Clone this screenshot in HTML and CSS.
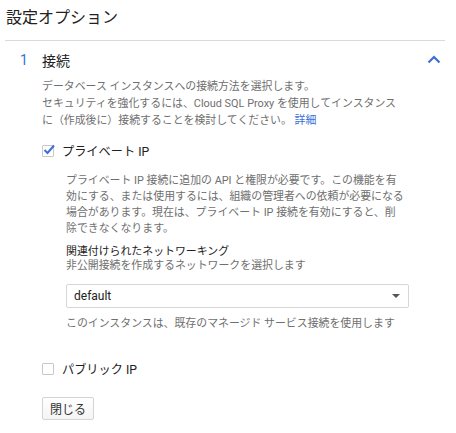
FILE: index.html
```html
<!DOCTYPE html>
<html lang="ja">
<head>
<meta charset="utf-8">
<link rel="stylesheet" href="styles.css">
</head>
<body>
<div class="page">
  <h1 class="title">設定オプション</h1>
  <section class="step">
    <div class="step-head">
      <span class="step-num">1</span>
      <span class="step-name">接続</span>
      <svg class="chevron" width="14" height="9" viewBox="0 0 14 9"><path d="M1.5 7.5 L7 2 L12.5 7.5" fill="none" stroke="#3b6fd8" stroke-width="2.2"/></svg>
    </div>
    <div class="step-body">
      <p class="desc">データベース インスタンスへの接続方法を選択します。</p>
      <p class="desc">セキュリティを強化するには、Cloud SQL Proxy を使用して<span class="nw">インスタンス</span>に（作成後に）接続することを検討してください。 <a class="link">詳細</a></p>

      <label class="check">
        <span class="box checked">
          <svg width="14" height="14" viewBox="0 0 14 14"><path d="M2.5 7 L5.5 10 L12 2.5" fill="none" stroke="#3b6fd8" stroke-width="2"/></svg>
        </span>
        <span class="check-label">プライベート IP</span>
      </label>

      <div class="sub">
        <p class="help">プライベート IP 接続に追加の API と権限が必要です。この機能を有効にする、または使用するには、組織の管理者への依頼が必要になる場合があります。現在は、プライベート IP 接続を有効にすると、削<span class="nw">除で</span>きなくなります。</p>
        <div class="field-title">関連付けられたネットワーキング</div>
        <div class="field-sub">非公開接続を作成するネットワークを選択します</div>
        <div class="select">
          <span>default</span>
          <span class="caret"></span>
        </div>
        <div class="field-note">このインスタンスは、既存のマネージド サービス接続を使用します</div>
      </div>

      <label class="check public">
        <span class="box"></span>
        <span class="check-label">パブリック IP</span>
      </label>

      <button class="btn">閉じる</button>
    </div>
  </section>
</div>
</body>
</html>
```

FILE: styles.css
```css
* { box-sizing: border-box; }
body {
  margin: 0;
  background: #fff;
  font-family: Roboto, "Noto Sans CJK JP", sans-serif;
  color: #212121;
}
.page {
  padding: 0 11px 0 5px;
}
.title {
  margin: 0;
  padding: 8px 0 0 1px;
  height: 41px;
  font-size: 16px;
  font-weight: 400;
  line-height: 20px;
  border-bottom: 1px solid #dadada;
}
.step-head {
  display: flex;
  align-items: center;
  height: 37px;
}
.step-num {
  width: 37px;
  padding-left: 15px;
  color: #3b6fd8;
  font-size: 14px;
}
.step-name {
  font-size: 14px;
  flex: 1;
}
.chevron {
  margin-right: 4px;
}
.step-body {
  padding-left: 37px;
}
p { margin: 0; }
.desc {
  font-size: 10.9px;
  line-height: 17px;
  color: #6f6f6f;
  padding-right: 46px;
}
.nw { white-space: nowrap; }
.link { color: #3b6fd8; }
.check {
  display: flex;
  align-items: center;
  height: 20px;
  margin-top: 12px;
}
.box {
  width: 12px;
  height: 12px;
  border: 1px solid #c8c8c8;
  border-radius: 1px;
  position: relative;
  margin-right: 8px;
  flex-shrink: 0;
}
.box svg {
  position: absolute;
  left: -1px;
  top: -3px;
}
.check-label {
  font-size: 12.2px;
  color: #212121;
}
.sub {
  padding-left: 24px;
  padding-right: 38px;
  margin-top: 12px;
}
.help {
  font-size: 10.9px;
  line-height: 16px;
  color: #6f6f6f;
}
.field-title {
  margin-top: 8px;
  font-size: 10.9px;
  line-height: 14px;
  color: #212121;
  font-weight: 400;
}
.field-sub {
  font-size: 10.9px;
  line-height: 14px;
  color: #6f6f6f;
}
.select {
  margin-top: 11px;
  height: 24px;
  width: 343px;
  border: 1px solid #d6d6d6;
  border-radius: 2px;
  display: flex;
  align-items: center;
  justify-content: space-between;
  padding: 0 8px 0 7px;
  font-size: 12px;
  color: #212121;
}
.caret {
  width: 0;
  height: 0;
  border-left: 4px solid transparent;
  border-right: 4px solid transparent;
  border-top: 4px solid #555;
}
.field-note {
  margin-top: 9px;
  font-size: 10.9px;
  line-height: 14px;
  color: #6f6f6f;
}
.public {
  margin-top: 28px;
}
.btn {
  display: block;
  margin-top: 18px;
  height: 23px;
  width: 52px;
  padding: 0;
  font-family: Roboto, "Noto Sans CJK JP", sans-serif;
  font-size: 12px;
  color: #333;
  background: linear-gradient(#fff, #f4f4f4);
  border: 1px solid #d4d4d4;
  border-radius: 2px;
}
```
